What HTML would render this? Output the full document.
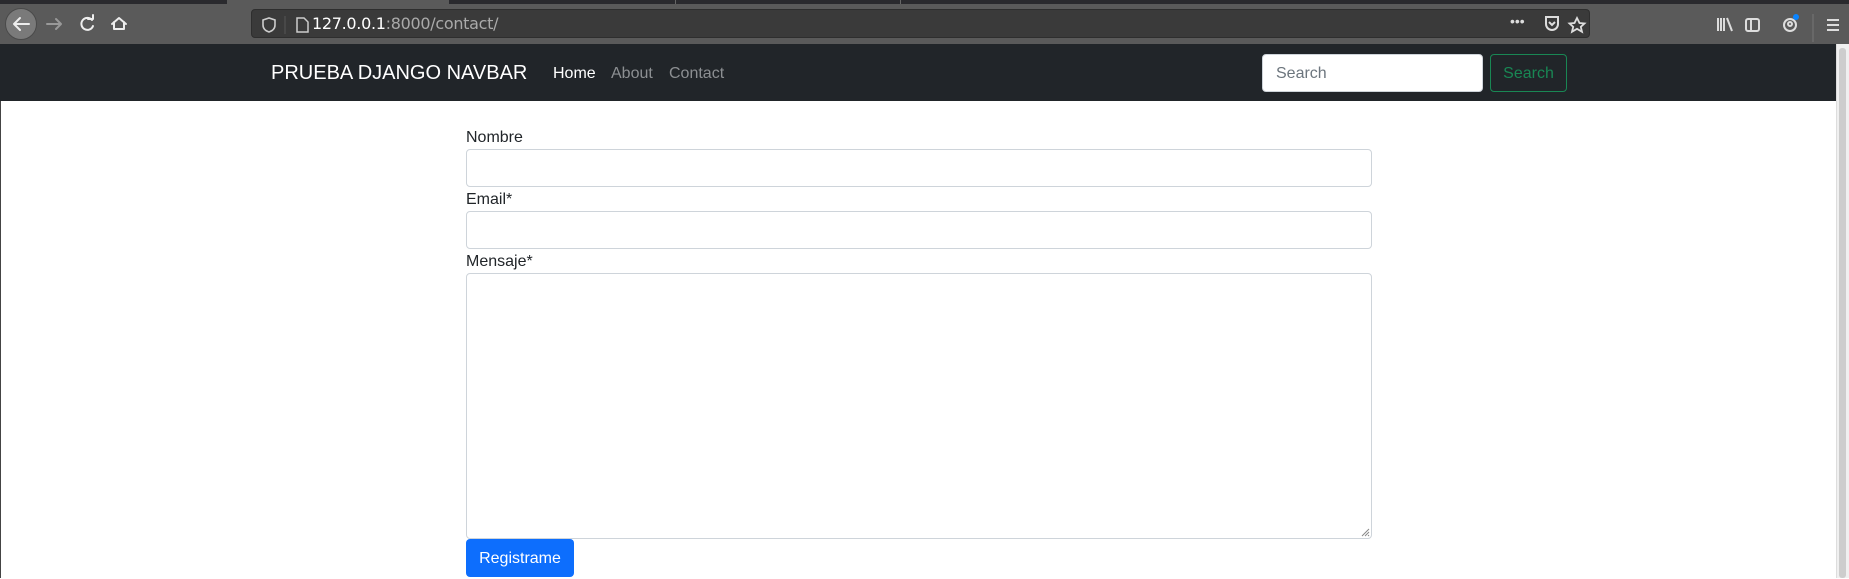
<!DOCTYPE html>
<html><head><meta charset="utf-8"><style>
*{box-sizing:border-box;margin:0;padding:0}
body{width:1849px;height:578px;overflow:hidden;background:#fff;font-family:"Liberation Sans",Arial,sans-serif;position:relative}
.abs{position:absolute}
#tabs{left:0;top:0;width:1849px;height:4px;background:#2a2a2e}
#tb{left:0;top:4px;width:1849px;height:40px;background:#5a5a5a}
#url{left:251px;top:9px;width:1339px;height:29px;background:#3a3a3a;border-radius:4px;border:1px solid #2e2e2e}
#nav{left:0;top:44px;width:1836px;height:57px;background:#212529}
.lbl{position:absolute;left:466px;font-size:16px;color:#212529}
.inp{position:absolute;left:466px;width:906px;border:1px solid #ced4da;border-radius:4px;background:#fff}
</style></head><body>
<div class="abs" id="tabs"></div>
<div class="abs" style="left:227px;top:0;width:222px;height:4px;background:#5a5a5a"></div>
<div class="abs" style="left:675px;top:0;width:1px;height:4px;background:#666"></div>
<div class="abs" style="left:900px;top:0;width:1px;height:4px;background:#666"></div>
<div class="abs" id="tb"></div>
<div class="abs" style="left:5px;top:8px;width:32px;height:32px;border-radius:50%;background:#7a7a7a;border:1px solid #4a4a4a"></div>
<svg class="abs" style="left:0;top:0" width="140" height="44"><g fill="none" stroke-width="2" stroke-linecap="round" stroke-linejoin="round">
<path d="M29 24H14M20 18l-6 6 6 6" stroke="#eee"/>
<path d="M61 24H47M56 19l5 5-5 5" stroke="#999"/>
<path d="M92 20a6 6 0 1 0 1 6M88 19h5v-4" stroke="#eee"/>
<path d="M112 24l7-6 7 6M114 22v7h10v-7" stroke="#eee"/></g></svg>
<div class="abs" id="url"></div>
<svg class="abs" style="left:255px;top:12px" width="80" height="26"><path d="M8 8l6-2 6 2v5c0 4-3 6-6 7-3-1-6-3-6-7z" fill="none" stroke="#ccc" stroke-width="1.6"/><line x1="30" y1="4" x2="30" y2="22" stroke="#555"/><path d="M42 6h7l4 4v10h-11z" fill="none" stroke="#ccc" stroke-width="1.5"/></svg>
<div class="abs" style="left:312px;top:14px;font-size:16px;color:#fff;font-family:'DejaVu Sans',sans-serif;letter-spacing:-0.3px;line-height:19px">127.0.0.1<span style="color:#aaa">:8000/contact/</span></div>
<div class="abs" style="left:1510px;top:13px;font-size:14px;color:#ddd;letter-spacing:0px">•••</div>
<svg class="abs" style="left:1530px;top:10px" width="100" height="30"><path d="M16 7h12v7a6 6 0 0 1-12 0z" fill="none" stroke="#ddd" stroke-width="2"/><path d="M19 12l3 3 3-3" fill="none" stroke="#ddd" stroke-width="2"/><path d="M47 8l2.5 5 5 .5-3.7 3.3 1.2 5-5-3-5 3 1.2-5-3.7-3.3 5-.5z" fill="none" stroke="#ddd" stroke-width="1.8"/></svg>
<svg class="abs" style="left:1710px;top:10px" width="139" height="32"><g stroke="#ddd" stroke-width="2" fill="none"><path d="M8 8v13M11 8v13M14 8v13M17 8l5 13"/><rect x="36" y="9" width="13" height="12" rx="2"/><path d="M41 9v12"/><circle cx="80" cy="15" r="6"/><circle cx="80" cy="14" r="2"/><path d="M103 4v28" stroke="#777" stroke-width="1"/><path d="M117 10h12M117 15h12M117 20h12"/></g><circle cx="86" cy="7" r="3" fill="#0a84ff"/></svg>
<div class="abs" id="nav"></div>
<div class="abs" style="left:271px;top:61px;font-size:20px;color:#fff;line-height:24px">PRUEBA DJANGO NAVBAR</div>
<div class="abs" style="left:553px;top:64px;font-size:16px;color:#fff;line-height:20px">Home</div>
<div class="abs" style="left:611px;top:64px;font-size:16px;color:#8c8f92;line-height:20px">About</div>
<div class="abs" style="left:669px;top:64px;font-size:16px;color:#8c8f92;line-height:20px">Contact</div>
<div class="abs" style="left:1262px;top:54px;width:221px;height:38px;background:#fff;border-radius:4px;border:1px solid #ced4da;padding:10px 13px;font-size:16px;color:#6c757d;line-height:17px">Search</div>
<div class="abs" style="left:1490px;top:54px;width:77px;height:38px;border:1px solid #198754;border-radius:4px;font-size:16px;color:#198754;text-align:center;line-height:38px">Search</div>
<div class="abs" style="left:1836px;top:44px;width:13px;height:534px;background:#f0f0f0;border-left:1px solid #ddd"></div>
<div class="abs" style="left:1839px;top:48px;width:7px;height:530px;background:#cdcdcd;border-radius:3px"></div>
<div class="abs" style="left:0;top:101px;width:1px;height:477px;background:#444"></div>
<div class="lbl" style="top:129px">Nombre</div>
<div class="inp" style="top:149px;height:38px"></div>
<div class="lbl" style="top:191px">Email*</div>
<div class="inp" style="top:211px;height:38px"></div>
<div class="lbl" style="top:253px">Mensaje*</div>
<div class="inp" style="top:273px;height:266px"></div>
<svg class="abs" style="left:1360px;top:527px" width="10" height="10"><path d="M9 2L2 9M9 5L5 9M9 8L8 9" stroke="#888"/></svg>
<div class="abs" style="left:466px;top:539px;width:108px;height:38px;background:#0d6efd;border-radius:4px;color:#fff;font-size:16px;text-align:center;line-height:40px">Registrame</div>
</body></html>
